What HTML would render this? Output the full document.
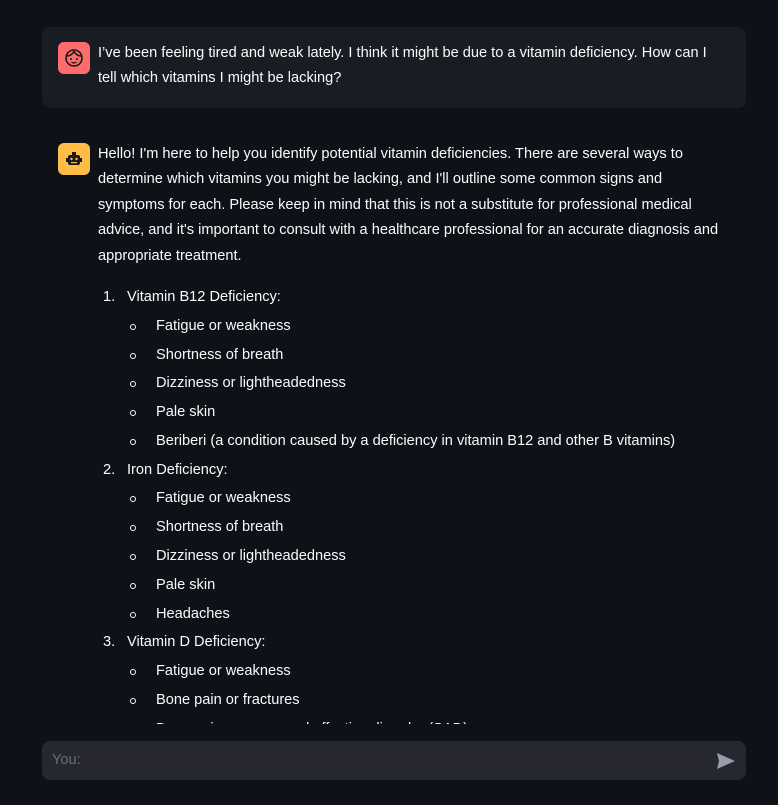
<!DOCTYPE html>
<html><head><style>
body{margin:0;width:778px;height:805px;background:#0e1117;font-family:"Liberation Sans",sans-serif;color:#fafafa;overflow:hidden;position:relative}
.msg{position:absolute;left:42px;width:704px;box-sizing:border-box;border-radius:8px}
.u{top:27px;height:81px;background:#1a1c24}
.av{position:absolute;left:16px;width:32px;height:32px;border-radius:6px}
.t{position:absolute;left:56px;right:20px;font-size:14.6px;line-height:25.4px;white-space:nowrap}
.clip{position:absolute;left:0;top:120px;width:778px;height:604px;overflow:hidden}
.li{position:absolute;font-size:14.6px;line-height:20px;white-space:nowrap}
.dot{position:absolute;width:4px;height:4px;border:1px solid #fafafa;border-radius:50%}
.inp{position:absolute;left:42px;top:741px;width:704px;height:39px;background:#262730;border-radius:8px}
</style></head><body>
<div class="msg u">
<div class="av" style="top:15px;background:#ff6c6c"><svg width="32" height="32" viewBox="0 0 32 32"><circle cx="16" cy="16" r="8" fill="none" stroke="#1a1a1a" stroke-width="1.6"/><path d="M9 14c3 0 6-2 7-5M16 9c1 3 4 5 7 5" fill="none" stroke="#1a1a1a" stroke-width="1.5"/><circle cx="13" cy="17" r="1" fill="#1a1a1a"/><circle cx="19" cy="17" r="1" fill="#1a1a1a"/><path d="M13.5 20q2.5 2 5 0" fill="none" stroke="#1a1a1a" stroke-width="1.2"/></svg></div>
<div class="t" style="top:14px">I’ve been feeling tired and weak lately. I think it might be due to a vitamin deficiency. How can I<br>tell which vitamins I might be lacking?</div>
</div>
<div class="clip">
<div class="av" style="left:58px;top:23px;background:#ffbd45"><svg width="32" height="32" viewBox="0 0 32 32"><rect x="10" y="12" width="12" height="10" rx="2" fill="#1a1a1a"/><rect x="14" y="9" width="4" height="3" fill="#1a1a1a"/><rect x="8" y="15" width="2" height="4" fill="#1a1a1a"/><rect x="22" y="15" width="2" height="4" fill="#1a1a1a"/><circle cx="13.5" cy="16" r="1.2" fill="#ffbd45"/><circle cx="18.5" cy="16" r="1.2" fill="#ffbd45"/><rect x="13" y="19" width="6" height="1.2" fill="#ffbd45"/></svg></div>
<div class="t" style="left:98px;width:650px;top:22px">Hello! I'm here to help you identify potential vitamin deficiencies. There are several ways to<br>determine which vitamins you might be lacking, and I'll outline some common signs and<br>symptoms for each. Please keep in mind that this is not a substitute for professional medical<br>advice, and it's important to consult with a healthcare professional for an accurate diagnosis and<br>appropriate treatment.</div>
<div class="li" style="left:103px;top:167px">1.</div><div class="li" style="left:127px;top:167px">Vitamin B12 Deficiency:</div>
<div class="dot" style="left:130px;top:204px"></div><div class="li" style="left:156px;top:196px">Fatigue or weakness</div>
<div class="dot" style="left:130px;top:233px"></div><div class="li" style="left:156px;top:225px">Shortness of breath</div>
<div class="dot" style="left:130px;top:261px"></div><div class="li" style="left:156px;top:253px">Dizziness or lightheadedness</div>
<div class="dot" style="left:130px;top:290px"></div><div class="li" style="left:156px;top:282px">Pale skin</div>
<div class="dot" style="left:130px;top:319px"></div><div class="li" style="left:156px;top:311px">Beriberi (a condition caused by a deficiency in vitamin B12 and other B vitamins)</div>
<div class="li" style="left:103px;top:340px">2.</div><div class="li" style="left:127px;top:340px">Iron Deficiency:</div>
<div class="dot" style="left:130px;top:376px"></div><div class="li" style="left:156px;top:368px">Fatigue or weakness</div>
<div class="dot" style="left:130px;top:405px"></div><div class="li" style="left:156px;top:397px">Shortness of breath</div>
<div class="dot" style="left:130px;top:434px"></div><div class="li" style="left:156px;top:426px">Dizziness or lightheadedness</div>
<div class="dot" style="left:130px;top:463px"></div><div class="li" style="left:156px;top:455px">Pale skin</div>
<div class="dot" style="left:130px;top:492px"></div><div class="li" style="left:156px;top:484px">Headaches</div>
<div class="li" style="left:103px;top:512px">3.</div><div class="li" style="left:127px;top:512px">Vitamin D Deficiency:</div>
<div class="dot" style="left:130px;top:549px"></div><div class="li" style="left:156px;top:541px">Fatigue or weakness</div>
<div class="dot" style="left:130px;top:578px"></div><div class="li" style="left:156px;top:570px">Bone pain or fractures</div>
<div class="dot" style="left:130px;top:607px"></div><div class="li" style="left:156px;top:599px">Depression or seasonal affective disorder (SAD)</div>
</div>
<div class="inp"><span style="position:absolute;left:10px;top:11px;font-size:14.6px;color:#6b6d78">You:</span>
<svg style="position:absolute;left:674px;top:11px" width="20" height="18" viewBox="0 0 20 18"><path d="M1 1L19 9L1 17L3 9Z" fill="#9a9ca8"/></svg></div>
</body></html>
